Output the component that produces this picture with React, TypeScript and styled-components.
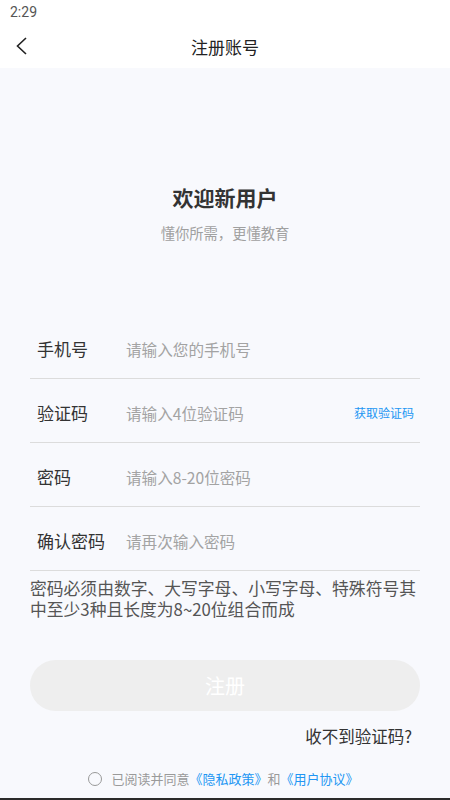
import React from "react";
import styled, { createGlobalStyle } from "styled-components";

const Global = createGlobalStyle`
  html, body { margin: 0; padding: 0; }
  body {
    font-family: "Noto Sans CJK SC", "Noto Sans", Roboto, sans-serif;
    background: #f8f9fd;
  }
  * { box-sizing: border-box; }
`;

const Screen = styled.div`
  width: 450px;
  height: 800px;
  display: flex;
  flex-direction: column;
  background: #f8f9fd;
  border-bottom: 2px solid #2b2b2b;
  overflow: hidden;
`;

const StatusBar = styled.div`
  height: 24px;
  background: #fff;
  padding-left: 10px;
  display: flex;
  align-items: center;
  font-family: Roboto, "Noto Sans", sans-serif;
  font-size: 14px;
  color: #555;
`;

const Header = styled.div`
  height: 44px;
  background: #fff;
  display: grid;
  grid-template-columns: 60px 1fr 60px;
  align-items: center;
`;

const BackBtn = styled.div`
  display: flex;
  align-items: center;
  padding-left: 15px;
  height: 100%;
`;

const Title = styled.div`
  text-align: center;
  font-size: 17px;
  color: #222;
  line-height: 1;
`;

const Body = styled.div`
  flex: 1;
  display: flex;
  flex-direction: column;
  padding: 0 30px;
`;

const Welcome = styled.div`
  margin-top: 116px;
  text-align: center;
  font-size: 21px;
  font-weight: 700;
  color: #333;
  line-height: 26px;
`;

const Slogan = styled.div`
  margin-top: 13px;
  text-align: center;
  font-size: 14.3px;
  color: #a0a0a0;
  line-height: 20px;
`;

const Form = styled.div`
  margin-top: 72px;
  display: flex;
  flex-direction: column;
`;

const Row = styled.div`
  height: 64px;
  display: flex;
  align-items: center;
  border-bottom: 1.5px solid #dcdcdc;
  padding: 4px 6px 0 7px;
`;

const Label = styled.div`
  width: 89px;
  font-size: 17px;
  color: #333;
  flex-shrink: 0;
`;

const Placeholder = styled.div`
  flex: 1;
  font-size: 15.6px;
  color: #a3a3a3;
`;

const CodeLink = styled.div`
  font-size: 12px;
  color: #2196f3;
`;

const Hint = styled.div`
  margin-top: 7px;
  font-size: 16.8px;
  line-height: 21px;
  color: #555;
`;

const SubmitBtn = styled.div`
  margin-top: 40px;
  height: 51px;
  border-radius: 26px;
  background: #eeeeee;
  color: #fff;
  font-size: 20px;
  display: flex;
  align-items: center;
  justify-content: center;
`;

const Resend = styled.div`
  margin-top: 14px;
  align-self: flex-end;
  padding-right: 8px;
  font-size: 16.5px;
  color: #333;
  line-height: 22px;
`;

const Agree = styled.div`
  margin-top: 22px;
  display: flex;
  align-items: center;
  justify-content: center;
  font-size: 13px;
  color: #9a9a9a;
  padding-right: 3px;
`;

const Radio = styled.span`
  width: 14px;
  height: 14px;
  border-radius: 50%;
  border: 1.3px solid #999;
  margin-right: 9px;
`;

const LinkText = styled.span`
  color: #2196f3;
`;

const fields = [
  { label: "手机号", ph: "请输入您的手机号" },
  { label: "验证码", ph: "请输入4位验证码", code: true },
  { label: "密码", ph: "请输入8-20位密码" },
  { label: "确认密码", ph: "请再次输入密码" },
];

export default function App() {
  return (
    <>
      <Global />
      <Screen>
        <StatusBar>2:29</StatusBar>
        <Header>
          <BackBtn>
            <svg width="14" height="20" viewBox="0 0 14 20">
              <path d="M11 2 L2.5 10 L11 18" fill="none" stroke="#222" strokeWidth="1.6" />
            </svg>
          </BackBtn>
          <Title>注册账号</Title>
          <div />
        </Header>
        <Body>
          <Welcome>欢迎新用户</Welcome>
          <Slogan>懂你所需，更懂教育</Slogan>
          <Form>
            {fields.map((f) => (
              <Row key={f.label}>
                <Label>{f.label}</Label>
                <Placeholder>{f.ph}</Placeholder>
                {f.code && <CodeLink>获取验证码</CodeLink>}
              </Row>
            ))}
          </Form>
          <Hint>密码必须由数字、大写字母、小写字母、特殊符号其中至少3种且长度为8~20位组合而成</Hint>
          <SubmitBtn>注册</SubmitBtn>
          <Resend>收不到验证码?</Resend>
          <Agree>
            <Radio />
            已阅读并同意<LinkText>《隐私政策》</LinkText>和<LinkText>《用户协议》</LinkText>
          </Agree>
        </Body>
      </Screen>
    </>
  );
}
